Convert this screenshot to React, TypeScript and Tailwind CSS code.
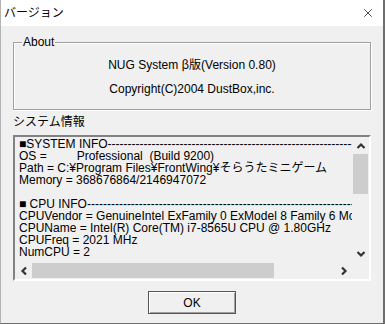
import { X } from "lucide-react"

const FONT = "font-['Liberation_Sans','Noto_Sans_CJK_JP',sans-serif]"

const lines = [
  "■SYSTEM INFO--------------------------------------------------------------------",
  "OS =         Professional  (Build 9200)",
  "Path = C:¥Program Files¥FrontWing¥そらうたミニゲーム",
  "Memory = 368676864/2146947072",
  "",
  "■ CPU INFO----------------------------------------------------------------------",
  "CPUVendor = GenuineIntel ExFamily 0 ExModel 8 Family 6 Model 14 Stepping 12",
  "CPUName = Intel(R) Core(TM) i7-8565U CPU @ 1.80GHz",
  "CPUFreq = 2021 MHz",
  "NumCPU = 2",
]

// scroll arrow drawn as a small inline svg chevron
function Arrow({ dir }: { dir: "up" | "down" | "left" | "right" }) {
  const pts = {
    up: "1.5,7 5,3.5 8.5,7",
    down: "1.5,3 5,6.5 8.5,3",
    left: "7,1.5 3.5,5 7,8.5",
    right: "3,1.5 6.5,5 3,8.5",
  }[dir]
  return (
    <svg width="10" height="10" viewBox="0 0 10 10" className="shrink-0">
      <polyline points={pts} fill="none" stroke="#333333" strokeWidth="2.2" />
    </svg>
  )
}

export default function App() {
  return (
    <div
      className={`${FONT} w-[385px] h-[324px] flex flex-col bg-[#f0f0f0] border-l border-l-[#b4b4b4] border-r-2 border-r-[#6e6e6e] border-b border-b-[#6e6e6e] text-[12px] text-black overflow-hidden`}
    >
      {/* title bar */}
      <div className="h-[26px] shrink-0 bg-white flex items-center justify-between pl-[3px] pr-[8px]">
        <span className="text-[12px]">バージョン</span>
        <X className="w-[14px] h-[14px]" strokeWidth={1.2} />
      </div>

      <div className="flex flex-col px-[12px]">
        {/* About group */}
        <fieldset className="mt-[9px] h-[75px] border border-[#a0a0a0] shadow-[1px_1px_0_#fff,inset_1px_1px_0_#fff] px-0 flex flex-col items-center">
          <legend className="ml-[8px] px-[1px] leading-[14px]">About</legend>
          <div className="mt-[8px] leading-[14px]">
            NUG System <span className="font-['Noto_Sans_CJK_JP',sans-serif]">β</span>版(Version 0.80)
          </div>
          <div className="mt-[10px] leading-[14px]">Copyright(C)2004 DustBox,inc.</div>
        </fieldset>

        <div className="mt-[5px] leading-[14px]">システム情報</div>

        {/* read-only text box */}
        <div className="mt-[6px] h-[146px] border-2 border-t-[#828282] border-l-[#828282] border-b-white border-r-white flex">
          <div className="flex-1 min-w-0 flex flex-col">
            <div className="h-[125px] shrink-0 overflow-hidden pl-[4px] pt-[1px]">
              {lines.map((l, i) => (
                <div key={i} className="h-[12px] leading-[12px] whitespace-pre">
                  {l}
                </div>
              ))}
            </div>
            <div className="h-[17px] shrink-0 flex items-center">
              <div className="w-[17px] h-[17px] shrink-0 flex items-center justify-center">
                <Arrow dir="left" />
              </div>
              <div className="w-[242px] h-[15px] shrink-0 bg-[#cdcdcd]" />
              <div className="flex-1" />
              <div className="w-[17px] h-[17px] shrink-0 flex items-center justify-center">
                <Arrow dir="right" />
              </div>
            </div>
          </div>
          <div className="w-[17px] shrink-0 flex flex-col">
            <div className="h-[17px] shrink-0 flex items-center justify-center">
              <Arrow dir="up" />
            </div>
            <div className="h-[40px] shrink-0 mx-[1px] bg-[#cdcdcd]" />
            <div className="h-[51px] shrink-0" />
            <div className="h-[17px] shrink-0 flex items-center justify-center">
              <Arrow dir="down" />
            </div>
          </div>
        </div>

        <div className="flex justify-center mt-[10px]">
          <button className="w-[88px] h-[23px] border border-[#555] bg-[#f0f0f0] shadow-[inset_1px_1px_0_#fff,inset_-1px_-1px_0_#a0a0a0] leading-[14px]">
            OK
          </button>
        </div>
      </div>
    </div>
  )
}
